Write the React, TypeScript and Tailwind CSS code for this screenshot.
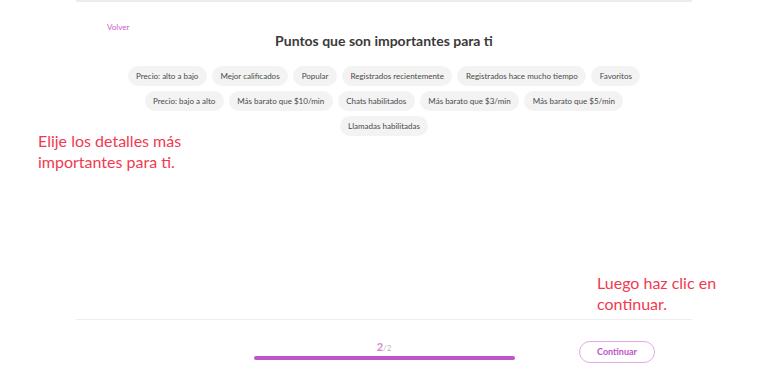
import React from "react";

const filters = [
  "Precio: alto a bajo",
  "Mejor calificados",
  "Popular",
  "Registrados recientemente",
  "Registrados hace mucho tiempo",
  "Favoritos",
  "Precio: bajo a alto",
  "Más barato que $10/min",
  "Chats habilitados",
  "Más barato que $3/min",
  "Más barato que $5/min",
  "Llamadas habilitadas",
];

export default function App() {
  return (
    <div className="relative w-[768px] h-[384px] bg-white overflow-hidden font-['Lato',sans-serif]">
      {/* Wizard panel */}
      <div className="w-[616px] h-full mx-auto flex flex-col">
        <div className="h-[2px] bg-[#ececec]" />

        <div className="pl-[31px] pt-[20px] h-[29px] text-[8px] leading-[10px] text-[#c65bd0]">
          Volver
        </div>

        <h1 className="text-center text-[14px] leading-[20px] font-bold text-[#3a3a3a]">
          Puntos que son importantes para ti
        </h1>

        <div className="mt-[15px] w-[524px] mx-auto flex flex-wrap justify-center gap-[5px]">
          {filters.map((f) => (
            <button
              key={f}
              className="h-[20px] px-[8.5px] rounded-full bg-[#f3f3f3] text-[8px] leading-[20px] text-[#4a4a4a]"
            >
              {f}
            </button>
          ))}
        </div>

        <div className="flex-1" />

        <div className="h-px bg-[#efefef]" />

        {/* Footer: progress + continue */}
        <div className="grid grid-cols-[1fr_261px_1fr] items-center h-[64px]">
          <div />
          <div className="flex flex-col items-center pb-[6px]">
            <p className="leading-[14px] text-[#b8b8b8]">
              <span className="text-[11px] font-bold text-[#d08ad8]">2</span>
              <span className="text-[8px]">/2</span>
            </p>
            <div className="mt-[1px] w-full h-[4px] rounded-full bg-[#c054c8]" />
          </div>
          <div className="flex justify-end pr-[37px]">
            <button className="w-[76px] h-[22px] rounded-full border border-[#e2a9e8] text-[9px] font-bold text-[#c054c8]">
              Continuar
            </button>
          </div>
        </div>
      </div>

      {/* Annotations */}
      <p className="absolute left-[38px] top-[130px] text-[16px] leading-[21px] text-[#f2394f]">
        Elije los detalles más
        <br />
        importantes para ti.
      </p>
      <p className="absolute left-[597px] top-[272px] text-[16px] leading-[21px] text-[#f2394f]">
        Luego haz clic en
        <br />
        continuar.
      </p>
    </div>
  );
}
